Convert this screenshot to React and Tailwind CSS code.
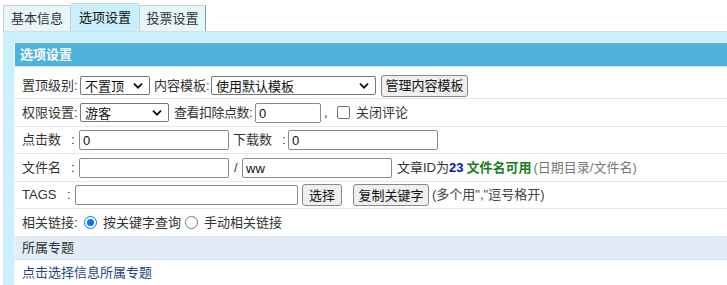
import React from "react";

const font = { fontFamily: '"Liberation Sans", "Noto Sans CJK SC", sans-serif' };

function Chevron() {
  return (
    <svg width="10" height="7" viewBox="0 0 10 7" className="pointer-events-none absolute right-[6px] top-1/2 -translate-y-1/2">
      <path d="M1 1.2 L5 5.2 L9 1.2" fill="none" stroke="#111" strokeWidth="1.8" />
    </svg>
  );
}

function Select({ w, value }) {
  return (
    <div className={`relative h-[19px] ${w} shrink-0 rounded-[2px] border border-[#767676] bg-white`}>
      <span className="absolute left-[4px] top-1/2 -translate-y-1/2 whitespace-nowrap text-[13px] leading-none text-[#111]">{value}</span>
      <Chevron />
    </div>
  );
}

function Input({ w, value = "" }) {
  return (
    <div className={`relative h-[20px] ${w} shrink-0 rounded-[2px] border border-[#8a8a8a] bg-white`}>
      <span className="absolute left-[3px] top-1/2 -translate-y-1/2 text-[13px] leading-none text-[#111]">{value}</span>
    </div>
  );
}

function Button({ w, children }) {
  return (
    <div className={`flex h-[22px] ${w} shrink-0 items-center justify-center rounded-[3px] border border-[#8a8a8a] bg-[#efefef] text-[13px] leading-none text-[#111]`}>
      {children}
    </div>
  );
}

function Radio({ checked }) {
  return checked ? (
    <span className="flex h-[13px] w-[13px] shrink-0 items-center justify-center rounded-full border-[1px] border-[#0075ff] bg-white">
      <span className="h-[7px] w-[7px] rounded-full bg-[#0075ff]" />
    </span>
  ) : (
    <span className="h-[13px] w-[13px] shrink-0 rounded-full border border-[#767676] bg-white" />
  );
}

export default function App() {
  return (
    <div className="h-[285px] w-[727px] overflow-hidden bg-white text-[13px] text-[#333]" style={font}>
      {/* tabs */}
      <div className="flex h-[31px] items-end pl-[3px]">
        <div className="flex h-[26px] w-[68px] items-center justify-center border border-b-0 border-[#c8d3d8] bg-[#e6f6fb] text-[#333]">基本信息</div>
        <div className="flex h-[28px] w-[68px] items-center justify-center border-t border-[#c8d3d8] bg-[#c9f0fc] text-[#111]">选项设置</div>
        <div className="flex h-[26px] w-[67px] items-center justify-center border border-b-0 border-r-[#8a9aa3] border-[#c8d3d8] bg-[#e6f6fb] text-[#333]">投票设置</div>
      </div>
      {/* panel */}
      <div className="ml-[3px] h-[254px] border-t border-[#d8dde0] bg-[#c9f0fc] pl-[11px] pt-[10px]">
        <div className="w-[760px] border-l border-t border-[#e8f9fe] bg-white">
          <div className="flex h-[23px] items-center bg-[#4fb3dd] pl-[5px] font-bold text-white">选项设置</div>
          <div className="h-[1px] bg-[#c9f0fc]" />
          {/* row1 */}
          <div className="flex h-[32px] items-center border-b border-[#e3e8ec] pl-[7px] pt-[6px]">
            <span className="w-[58px] whitespace-nowrap">置顶级别:</span>
            <Select w="w-[70px]" value="不置顶" />
            <span className="ml-[4px] w-[57px] whitespace-nowrap">内容模板:</span>
            <Select w="w-[165px]" value="使用默认模板" />
            <div className="ml-[5px]"><Button w="w-[87px]">管理内容模板</Button></div>
          </div>
          {/* row2 */}
          <div className="flex h-[28px] items-center border-b border-[#e3e8ec] pl-[7px]">
            <span className="w-[58px] whitespace-nowrap">权限设置:</span>
            <Select w="w-[89px]" value="游客" />
            <span className="ml-[5px] w-[81px] whitespace-nowrap tracking-[-0.5px]">查看扣除点数:</span>
            <Input w="w-[66px]" value="0" />
            <span className="ml-[3px] w-[13px]">,</span>
            <span className="h-[13px] w-[13px] shrink-0 rounded-[2px] border border-[#767676] bg-white" />
            <span className="ml-[6px] whitespace-nowrap">关闭评论</span>
          </div>
          {/* row3 */}
          <div className="flex h-[27px] items-center border-b border-[#e3e8ec] pl-[7px]">
            <span className="w-[49px] whitespace-nowrap">点击数</span>
            <span className="w-[8px]">:</span>
            <Input w="w-[150px]" value="0" />
            <span className="ml-[4px] w-[49px] whitespace-nowrap">下载数</span>
            <span className="w-[6px]">:</span>
            <Input w="w-[150px]" value="0" />
          </div>
          {/* row4 */}
          <div className="flex h-[28px] items-center border-b border-[#e3e8ec] pl-[7px]">
            <span className="w-[49px] whitespace-nowrap">文件名</span>
            <span className="w-[8px]">:</span>
            <Input w="w-[150px]" />
            <span className="ml-[5px] w-[8px]">/</span>
            <Input w="w-[150px]" value="ww" />
            <span className="ml-[5px] whitespace-nowrap">文章ID为</span>
            <span className="font-bold text-[#0a14b4]">23</span>
            <span className="ml-[3px] whitespace-nowrap font-bold text-[#1b7d1b]">文件名可用</span>
            <span className="ml-[2px] whitespace-nowrap text-[#777]">(日期目录/文件名)</span>
          </div>
          {/* row5 */}
          <div className="flex h-[27px] items-center border-b border-[#e3e8ec] pl-[7px]">
            <span className="w-[45px] whitespace-nowrap">TAGS</span>
            <span className="w-[8px]">:</span>
            <Input w="w-[223px]" />
            <div className="ml-[4px]"><Button w="w-[40px]">选择</Button></div>
            <div className="ml-[11px]"><Button w="w-[76px]">复制关键字</Button></div>
            <span className="ml-[3px] whitespace-nowrap text-[#444]">(多个用","逗号格开)</span>
          </div>
          {/* row6 */}
          <div className="flex h-[28px] items-center border-b border-[#e3e8ec] pl-[7px]">
            <span className="w-[62px] whitespace-nowrap">相关链接:</span>
            <Radio checked />
            <span className="ml-[6px] w-[82px] whitespace-nowrap">按关键字查询</span>
            <Radio />
            <span className="ml-[6px] whitespace-nowrap">手动相关链接</span>
          </div>
          {/* 所属专题 */}
          <div className="flex h-[23px] items-center border-b border-[#cfe0ef] bg-[#e1ecf7] pl-[7px]">所属专题</div>
          <div className="flex h-[25px] items-center pl-[7px] text-[#26477f]">点击选择信息所属专题</div>
        </div>
      </div>
    </div>
  );
}
